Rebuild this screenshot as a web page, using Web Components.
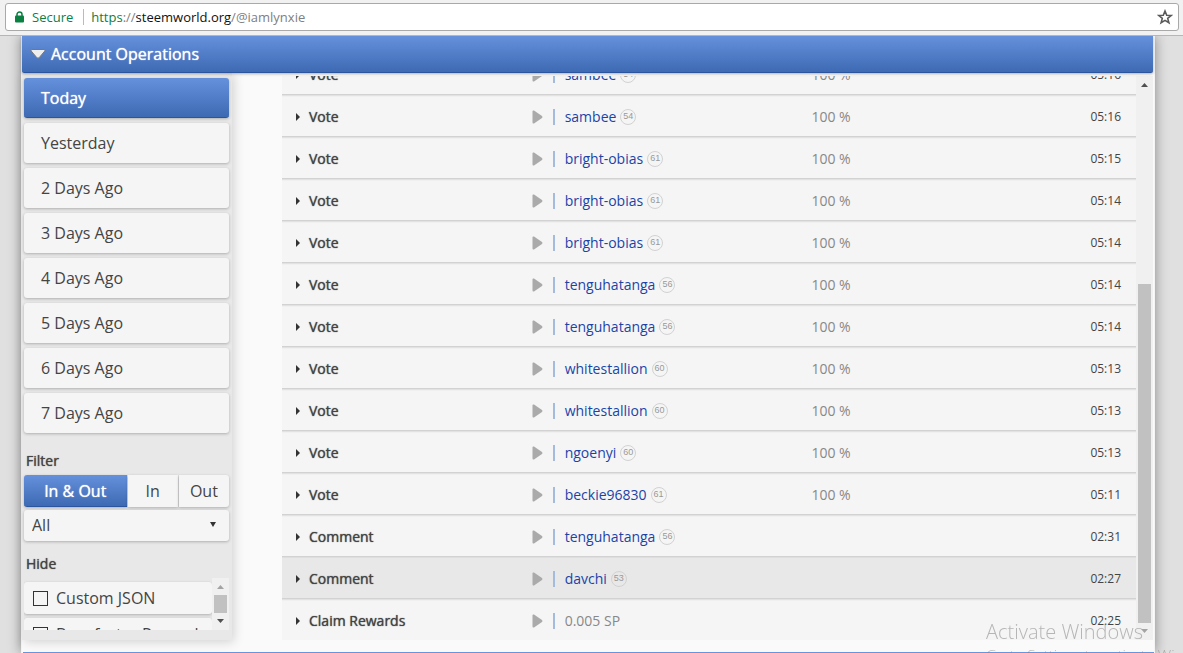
<!DOCTYPE html>
<html lang="en">
<head>
<meta charset="utf-8">
<title>Account Operations</title>
<style>
  html, body { margin: 0; height: 100%; }
  body {
    display: flex; flex-direction: column; overflow: hidden;
    background: #e0e0e0; color: #444;
    font: 14px/20px "Open Sans", "Noto Sans", sans-serif;
  }
</style>
</head>
<body>
<address-bar></address-bar>
<page-body>
  <account-section heading="Account Operations">
    <ops-sidebar slot="side"></ops-sidebar>
    <ops-list></ops-list>
  </account-section>
</page-body>
<activation-note></activation-note>

<script>
const define = (name, html, setup) => {
  const tpl = document.createElement('template');
  tpl.innerHTML = html;
  customElements.define(name, class extends HTMLElement {
    constructor() {
      super();
      this.attachShadow({ mode: 'open' }).append(tpl.content.cloneNode(true));
    }
    connectedCallback() { if (setup) setup(this, this.shadowRoot); }
  });
};

define('address-bar', `
<style>
  :host { display: block; flex: none; background: #f1f1f1; border-bottom: 1px solid #b6b6b6; padding: 3px 4px 4px 5px; position: relative; z-index: 2; }
  .box { display: flex; align-items: center; height: 26px; background: #fff; border: 1px solid #a9a9a9; border-radius: 3px; padding: 0 5px 0 9px; font: 13px/20px "Open Sans", sans-serif; }
  .lock { margin-right: 8px; }
  .secure { color: #0b8043; }
  .bar { width: 1px; height: 16px; background: #bbb; margin: 0 7px 0 10px; }
  a { flex: 1; color: #808080; text-decoration: none; }
  .host { color: #111; }
  .scheme { color: #0b8043; }
  button { border: 0; padding: 0; background: none; display: flex; }
</style>
<div class="box">
  <svg class="lock" width="9" height="12" viewBox="0 0 9 12"><path d="M2 5.500V3.500a2.500 2.500 0 0 1 5 0V5.500" fill="none" stroke="#0b8043" stroke-width="1.500"/><rect y="4.500" width="9" height="7" rx="1" fill="#0b8043"/></svg>
  <span class="secure">Secure</span><span class="bar"></span>
  <a href="#"><span class="scheme">https</span>://<span class="host">steemworld.org</span>/@iamlynxie</a>
  <button aria-label="Bookmark this page"><svg width="16" height="16" viewBox="0 0 16 16"><path d="M8 2l1.700 4.200 4.500.3-3.500 2.900 1.200 4.400L8 11.400l-3.900 2.400 1.200-4.400L1.800 6.500l4.500-.3z" fill="none" stroke="#5a5a5a" stroke-width="1.600"/></svg></button>
</div>`);

define('page-body', `
<style>
  :host { display: flex; flex-direction: column; flex: 1; min-height: 0; margin: 0 28px 0 21px; background: #fafafa; border: solid #f4f4f4; border-width: 0 1px; box-shadow: 0 0 12px rgba(0,0,0,.4); }
  .next { flex: 1; margin: 12px 0 0 1px; background: #6893de; }
</style>
<slot></slot>
<div class="next"></div>`);

define('account-section', `
<style>
  :host { display: block; flex: none; }
  h2 { margin: 0 1px 0 0; height: 36px; display: flex; align-items: center; gap: 5px; padding: 0 8px; color: #fff; font-size: 16px; line-height: 22px; font-weight: 400; text-shadow: 0 0 1px #fff; background: linear-gradient(#6591dc, #3e6ab4); border-bottom: 1px solid #2c55a0; border-radius: 0 0 2px 2px; box-shadow: 0 1px 3px rgba(0,0,0,.3); position: relative; }
  .cols { display: flex; align-items: flex-start; }
  .main { flex: 1; min-width: 0; padding: 3px 1px 0 50px; }
</style>
<h2><svg width="16" height="12" viewBox="0 0 16 12"><path d="M1.800 1.500h12.400Q15.800 1.600 14.800 3L9.300 9.500Q8 11 6.700 9.500L1.200 3Q.2 1.600 1.800 1.500z" fill="#eee" stroke="#777" stroke-width="1"/></svg><span></span></h2>
<div class="cols"><slot name="side"></slot><div class="main"><slot></slot></div></div>`,
(el, root) => { root.querySelector('span').textContent = el.getAttribute('heading'); });

define('scroll-bar', `
<style>
  :host { display: flex; flex-direction: column; flex: none; align-items: center; width: 17px; background: #f0f0f0; }
  svg { flex: none; display: block; fill: #505050; }
  :host([at-start]) .up { fill: #a3a3a3; }
  :host([at-end]) .down { fill: #a3a3a3; }
  .track { flex: 1; width: 13px; display: flex; flex-direction: column; }
  i { flex: 1; }
  b { flex: none; height: var(--thumb, 50%); background: #c1c1c1; }
  :host([at-start]) i { display: none; }
</style>
<svg class="up" width="17" height="17" viewBox="0 0 17 17"><path d="M5 11l3.500-4 3.500 4z"/></svg>
<div class="track"><i></i><b></b></div>
<svg class="down" width="17" height="17" viewBox="0 0 17 17"><path d="M5 6l3.500 4L12 6z"/></svg>`);

define('ops-sidebar', `
<style>
  :host { display: block; flex: none; width: 205px; padding: 5px 3px 10px 2px; background: #e8e8e8; box-shadow: 2px 2px 10px rgba(0,0,0,.16); font-size: 16px; line-height: 22px; }
  button, select, .check { font: inherit; color: #444; background: #f5f5f5; border: 0; border-radius: 3px; box-shadow: 0 1px 3px rgba(0,0,0,.25); box-sizing: border-box; }
  .days { display: flex; flex-direction: column; gap: 5px; }
  .days button { height: 40px; padding: 0 17px; text-align: left; }
  button.on { color: #fff; text-shadow: 0 0 1px #fff; background: linear-gradient(#6591dc, #3e6ab4); border-bottom: 1px solid #2c55a0; }
  h3 { margin: 0; padding: 18px 2px 4px; font-size: 14px; line-height: 20px; font-weight: 400; text-shadow: 0 0 1px #444; }
  .seg { display: flex; gap: 1px; margin-bottom: 3px; }
  .seg button { height: 32px; padding: 0; flex: 50 1 0; border-radius: 0; }
  .seg button:first-child { flex-grow: 102; border-radius: 3px 0 0 3px; }
  .seg button:last-child { border-radius: 0 3px 3px 0; }
  .pick { position: relative; display: block; }
  select { appearance: none; display: block; width: 100%; height: 31px; padding: 0 8px 2px; }
  .pick svg { position: absolute; right: 13px; top: 11px; }
  .scroll { display: flex; height: 52px; overflow: hidden; }
  .checks { flex: 1; min-width: 0; padding-top: 4px; display: flex; flex-direction: column; gap: 4px; overflow: hidden; }
  .check { flex: none; height: 32px; display: flex; align-items: center; gap: 8px; padding: 0 9px; white-space: nowrap; }
  input { appearance: none; flex: none; width: 15px; height: 15px; margin: 0; border: 1px solid #333; border-radius: 0; }
  .hide { padding-top: 13px; padding-bottom: 4px; }
  scroll-bar { --thumb: 100%; }
</style>
<div class="days"></div>
<h3>Filter</h3>
<div class="seg"><button class="on">In &amp; Out</button><button>In</button><button>Out</button></div>
<label class="pick"><select aria-label="Operation type"><option>All</option></select><svg width="6" height="6" viewBox="0 0 6 6"><path d="M0 1h6L3 6z" fill="#333"/></svg></label>
<h3 class="hide">Hide</h3>
<div class="scroll"><div class="checks">
  <label class="check"><input type="checkbox">Custom JSON</label>
  <label class="check"><input type="checkbox">Benefactor Rewards</label>
</div><scroll-bar at-start></scroll-bar></div>`,
(el, root) => {
  const box = root.querySelector('.days');
  ['Today', 'Yesterday', ...[2, 3, 4, 5, 6, 7].map(n => n + ' Days Ago')].forEach((t, i) => {
    const b = document.createElement('button');
    b.textContent = t;
    if (!i) b.className = 'on';
    box.append(b);
  });
});

define('ops-list', `
<style>
  :host { display: flex; height: 564px; }
  .view { flex: 1; min-width: 0; display: flex; flex-direction: column; justify-content: flex-end; overflow: hidden; }
  table { flex: none; width: 100%; table-layout: fixed; border-collapse: separate; border-spacing: 0; }
  td { box-sizing: border-box; height: 42px; padding: 2px 0 0; background: #f5f5f5; border-bottom: 1px solid #d2d2d2; box-shadow: inset 0 1px #e2e2e2, inset 0 2px #f0f0f0; white-space: nowrap; }
  tr:last-child td { height: 41px; border: 0; }
  tr.hover td { background: #e8e8e8; box-shadow: inset 0 1px #dedede; }
  td > div { display: flex; align-items: center; }
  .c1 { width: 29%; } .c2 { width: 33%; }
  .type { text-shadow: 0 0 1px #444; gap: 9px; padding-left: 13px; }
  .who { padding-left: 2px; }
  .who i { width: 2px; height: 16px; background: #a3bcdd; margin: 0 10px; }
  a { color: #1a44a8; text-decoration: none; }
  .lvl { margin-left: 4px; width: 14px; height: 14px; border: 1px solid #d2d2d2; border-radius: 50%; font: 9px/13px "Liberation Sans", sans-serif; text-align: center; color: #999; }
  .pct, .sp { color: #888; }
  .time { text-align: right; padding-right: 15px; font-size: 12px; color: #444; }
  scroll-bar { --thumb: 64%; }
</style>
<div class="view"><table><colgroup><col class="c1"><col class="c2"><col><col></colgroup><tbody></tbody></table></div>
<scroll-bar at-end></scroll-bar>`,
(el, root) => {
  const rows = [
    ['Vote', 'sambee', 54, '05:16'], ['Vote', 'sambee', 54, '05:16'],
    ['Vote', 'bright-obias', 61, '05:15'], ['Vote', 'bright-obias', 61, '05:14'], ['Vote', 'bright-obias', 61, '05:14'],
    ['Vote', 'tenguhatanga', 56, '05:14'], ['Vote', 'tenguhatanga', 56, '05:14'],
    ['Vote', 'whitestallion', 60, '05:13'], ['Vote', 'whitestallion', 60, '05:13'],
    ['Vote', 'ngoenyi', 60, '05:13'], ['Vote', 'beckie96830', 61, '05:11'],
    ['Comment', 'tenguhatanga', 56, '02:31'], ['Comment', 'davchi', 53, '02:27'],
    ['Claim Rewards', '', 0, '02:25']
  ];
  root.querySelector('tbody').innerHTML = rows.map(([type, who, lvl, time]) => `
    <tr${who === 'davchi' ? ' class="hover"' : ''}>
      <td><div class="type"><svg width="5" height="8" viewBox="0 0 5 8"><path d="M1 0l4 4-4 4z" fill="#333"/></svg>${type}</div></td>
      <td><div class="who"><svg width="11" height="14" viewBox="0 0 11 14"><path d="M.5 1.500Q.5 0 2 .6L10 6Q11 7 10 8L2 13.400Q.5 14 .5 12.500z" fill="#aaa"/></svg><i></i>${
        who ? `<a href="#">${who}</a><span class="lvl">${lvl}</span>` : '<span class="sp">0.005 SP</span>'}</div></td>
      <td class="pct">${type === 'Vote' ? '100 %' : ''}</td>
      <td class="time">${time}</td>
    </tr>`).join('');
});

define('activation-note', `
<style>
  :host { position: fixed; left: 986px; top: 619px; z-index: 3; color: rgba(130,130,130,.55); white-space: nowrap; pointer-events: none; font-weight: 300; }
  div { font-size: 20px; line-height: 26px; }
  p { margin: 0; font-size: 15px; line-height: 20px; }
</style>
<div>Activate Windows</div>
<p>Go to Settings to activate Windows.</p>`);
</script>
</body>
</html>
